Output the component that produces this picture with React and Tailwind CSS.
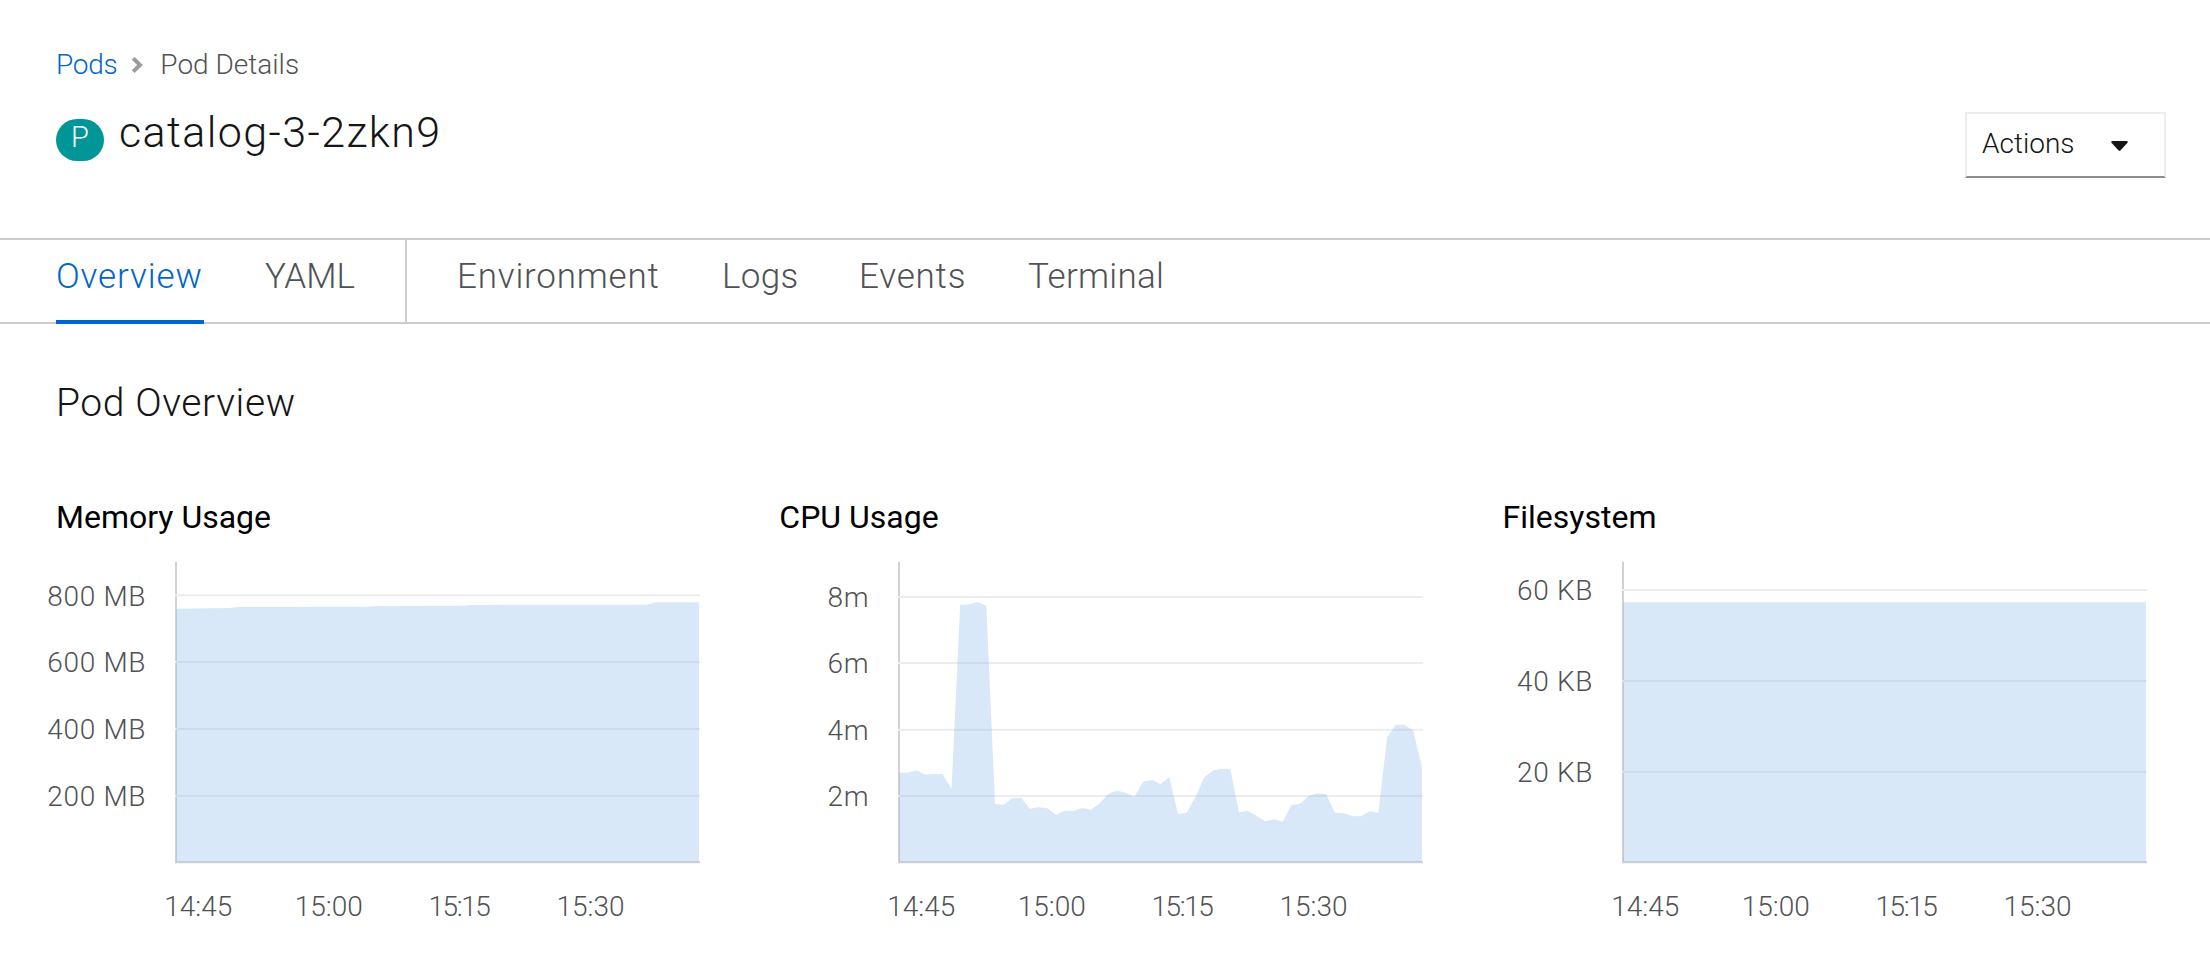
const CPU = [
  772.7, 772.7, 770.3, 774.7, 774, 774.3, 789, 605, 604.5, 602, 605.7, 804, 804.7, 798, 797.7, 808.7,
  807.3, 808.3, 814.7, 810.7, 811, 808, 809.7, 803.5, 794, 790.7, 792.7, 796.7, 781.7, 780, 784, 777,
  814, 812.7, 797.3, 777.3, 770.7, 768.7, 769.3, 812.3, 811, 815.7, 821.3, 819.3, 822, 805.3, 803.7,
  796, 793.3, 794, 812.7, 813.3, 816, 816.3, 811.3, 812.7, 737.3, 725, 724.7, 730.7, 767.3,
].map((y, i) => [136.2 + i * 8.713, y - 540]);

const MEMORY = [
  [136.2, 68.7], [189, 68.1], [197, 67.1], [330, 66.7], [337, 66], [423, 65.7], [431, 64.9], [607, 64.7],
  [616, 62.3], [659, 62.2],
];

const FILESYSTEM = [[136.2, 62.3], [659, 62.3]];

const CHARTS = [
  {
    title: "Memory Usage",
    points: MEMORY,
    ticks: [["800 MB", 55.3], ["600 MB", 122], ["400 MB", 189], ["200 MB", 255.7]],
  },
  {
    title: "CPU Usage",
    points: CPU,
    ticks: [["8m", 57], ["6m", 123], ["4m", 189.8], ["2m", 256]],
  },
  {
    title: "Filesystem",
    points: FILESYSTEM,
    ticks: [["60 KB", 50], ["40 KB", 141], ["20 KB", 231.7]],
  },
];

const TIMES = [["14:45", 158.3], ["15:00", 288.8], ["15:15", 419], ["15:30", 550.5]];

function AreaChart({ title, points, ticks }) {
  const line = points.map(([x, y]) => `${x.toFixed(1)} ${y}`).join(" L");
  return (
    <section>
      <h2 className="text-[32px] leading-10 font-normal text-black">{title}</h2>
      <svg className="mt-[3px] -ml-4 block overflow-visible" width="680" height="400" viewBox="0 0 680 400">
        <path d="M136 21.7V323.3" stroke="#d2d2d2" strokeWidth="2" />
        <path d="M135 322.3H660" stroke="#d2d2d2" strokeWidth="2" />
        {ticks.map(([label, y]) => (
          <g key={label}>
            <path d={`M135 ${y}H660`} stroke="#ededed" strokeWidth="2" />
            <text x="106.2" y={y + 10.3} textAnchor="end" fill="#4f5255" className="text-[28px] font-[350] tracking-[0.7px]">
              {label}
            </text>
          </g>
        ))}
        <path d={`M${line} V322.3 H136.2Z`} fill="#73aee6" fillOpacity="0.28" />
        {TIMES.map(([label, x]) => (
          <text
            key={label}
            x={x}
            y="376.3"
            textAnchor="middle"
            fill="#4f5255"
            className={label === "15:15" ? "text-[28px] font-[350] tracking-[-1.4px]" : "text-[28px] font-[350]"}
          >
            {label}
          </text>
        ))}
      </svg>
    </section>
  );
}

export default function App() {
  return (
    <div className="h-[968px] w-[2210px] overflow-hidden bg-white font-[Roboto,sans-serif] text-[#151515]">
      <header className="h-[238px] pt-[45px] pr-11 pl-14">
        <nav className="flex text-[28px] leading-10 font-[350]">
          <a className="tracking-[-0.3px] text-[#06c]">Pods</a>
          <svg className="mt-[12px] ml-[15px] block" width="11" height="16" viewBox="0 0 11 16" fill="none">
            <path d="M2.6 2.8 8 8l-5.4 5.2" stroke="#9c9c9c" strokeWidth="4" strokeLinecap="square" />
          </svg>
          <span className="ml-[17px] text-[#4f5255]">Pod Details</span>
        </nav>
        <div className="mt-[22px] flex items-start">
          <span className="mt-3 h-[42px] w-12 rounded-[21px] bg-[#009596] text-center text-[29px] leading-9 font-light text-white">
            P
          </span>
          <h1 className="ml-[15px] text-[43px] leading-[50px] font-light tracking-[1.4px]">catalog-3-2zkn9</h1>
          <button className="mt-[5px] ml-auto flex h-[66px] w-[201px] items-start justify-between border-2 border-[#ededed] border-b-[#8a8d90] pr-[36px] pl-[15px]">
            <span className="text-[28px] leading-[59px] font-[350]">Actions</span>
            <svg className="mt-[27px] block" width="17" height="10" viewBox="0 0 17 10">
              <path d="M1.2 0H15.8Q17.4 .5 16.3 1.9L9.6 9.2Q8.5 10.2 7.4 9.2L.7 1.9Q-.4.5 1.2 0Z" fill="#151515" />
            </svg>
          </button>
        </div>
      </header>

      <nav className="flex h-[86px] border-y-2 border-[#ccc] pl-14 text-[35px] leading-[74px] font-[350] text-[#4f5255]">
        <a className="-mb-0.5 w-[148px] border-b-4 border-[#06c] tracking-[0.9px] text-[#06c]">Overview</a>
        <a className="ml-[61px] w-[91px]">YAML</a>
        <span className="ml-[49px] w-0.5 bg-[#ccc]" />
        <a className="ml-[50px] w-[204px] tracking-[0.8px]">Environment</a>
        <a className="ml-[61px] w-[76px] tracking-[0.3px]">Logs</a>
        <a className="ml-[61px] w-[108px] tracking-[0.8px]">Events</a>
        <a className="ml-[61px] tracking-[0.3px]">Terminal</a>
      </nav>

      <main className="pt-[54px] pl-14">
        <h2 className="text-[39px] leading-[50px] font-light tracking-[0.6px]">Pod Overview</h2>
        <div className="mt-[69px] grid grid-cols-[723.3px_723.3px_680px]">
          {CHARTS.map((chart) => (
            <AreaChart key={chart.title} {...chart} />
          ))}
        </div>
      </main>
    </div>
  );
}
